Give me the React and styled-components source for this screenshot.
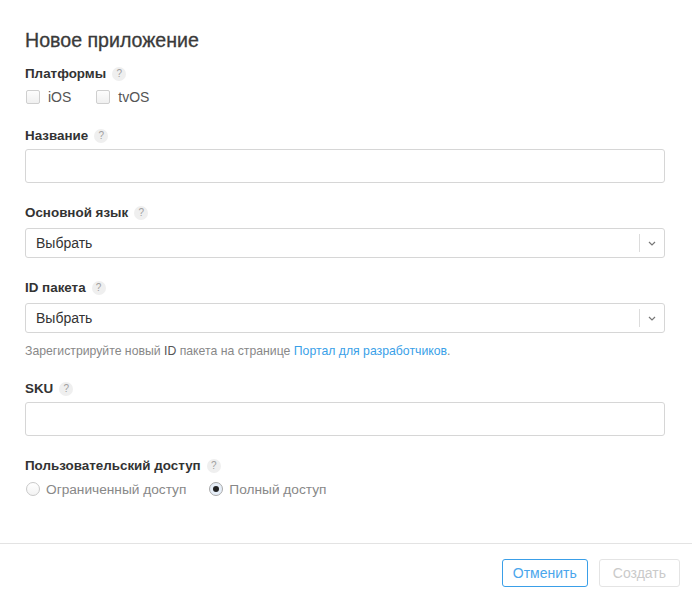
import React from "react";
import styled, { createGlobalStyle } from "styled-components";

const Global = createGlobalStyle`
  html, body { margin: 0; padding: 0; background: #fff; }
  body { font-family: "Liberation Sans", Arial, sans-serif; color: #333; }
  * { box-sizing: border-box; }
`;

const Page = styled.div`
  width: 692px;
  height: 599px;
  display: flex;
  flex-direction: column;
  background: #fff;
`;

const Content = styled.div`
  flex: 1;
  padding: 28px 27px 0 25px;
  display: flex;
  flex-direction: column;
`;

const Title = styled.h1`
  margin: 0 0 14px;
  font-size: 19.6px;
  line-height: 24px;
  font-weight: 400;
  color: #3a3a3a;
  -webkit-text-stroke: 0.3px #3a3a3a;
`;

const Field = styled.div`
  display: flex;
  flex-direction: column;
  margin-bottom: ${(p) => p.$mb ?? 22}px;
`;

const LabelRow = styled.div`
  display: flex;
  align-items: center;
  gap: 6px;
  height: 16px;
  margin-bottom: ${(p) => p.$gap ?? 5}px;
`;

const Label = styled.span`
  font-size: 13.4px;
  font-weight: 700;
  color: #333;
  line-height: 16px;
`;

const Help = styled.span`
  width: 14px;
  height: 14px;
  border-radius: 50%;
  background: #efefef;
  color: #a0a0a0;
  font-size: 10px;
  line-height: 14px;
  text-align: center;
`;

const CheckRow = styled.div`
  display: flex;
  align-items: center;
  height: 18px;
`;

const CheckItem = styled.label`
  display: flex;
  align-items: center;
  margin-right: ${(p) => p.$mr ?? 0}px;
  font-size: ${(p) => p.$size ?? 14}px;
  color: ${(p) => p.$color || "#555"};
`;

const Box = styled.span`
  width: 14px;
  height: 14px;
  border: 1px solid #cfcfcf;
  border-radius: 2px;
  background: linear-gradient(#fdfdfd, #f0f0f0);
  margin-left: 1px;
  margin-right: 8px;
`;

const Radio = styled.span`
  width: 14px;
  height: 14px;
  border-radius: 50%;
  border: 1px solid ${(p) => (p.$checked ? "#a9a9a9" : "#c9c9c9")};
  background: ${(p) => (p.$checked ? "#e6eef8" : "linear-gradient(#fff, #f3f3f3)")};
  margin-left: 1px;
  margin-right: 6px;
  display: flex;
  align-items: center;
  justify-content: center;
  &::after {
    content: "";
    display: ${(p) => (p.$checked ? "block" : "none")};
    width: 6px;
    height: 6px;
    border-radius: 50%;
    background: #222;
  }
`;

const TextInput = styled.div`
  height: 34px;
  border: 1px solid #d6d6d6;
  border-radius: 3px;
  background: #fff;
`;

const Select = styled.div`
  height: 30px;
  border: 1px solid #d6d6d6;
  border-radius: 3px;
  display: flex;
  align-items: center;
  padding-left: 10px;
  font-size: 14px;
  color: #333;
`;

const SelectValue = styled.span`
  flex: 1;
`;

const Divider = styled.span`
  width: 1px;
  height: 18px;
  background: #dcdcdc;
`;

const Arrow = styled.span`
  width: 24px;
  display: flex;
  align-items: center;
  justify-content: center;
`;

const Hint = styled.div`
  margin-top: 10px;
  font-size: 12.25px;
  line-height: 16px;
  color: #888;
`;

const Strong = styled.span`
  color: #555;
`;

const Link = styled.a`
  color: #3a9fe8;
  text-decoration: none;
`;

const Footer = styled.div`
  height: 56px;
  border-top: 1px solid #e3e3e3;
  display: flex;
  justify-content: flex-end;
  align-items: flex-start;
  padding: 15px 12px 0 0;
  gap: 11px;
`;

const Button = styled.button`
  height: 28px;
  padding: 0 ${(p) => p.$px}px;
  border-radius: 3px;
  background: #fff;
  font-family: inherit;
  font-size: 14px;
  border: 1px solid ${(p) => (p.$primary ? "#3a9fe8" : "#e4e4e4")};
  color: ${(p) => (p.$primary ? "#4aa6ec" : "#cacaca")};
`;

const Chevron = () => (
  <svg width="8" height="5" viewBox="0 0 8 5">
    <path d="M1 1l3 3 3-3" fill="none" stroke="#777" strokeWidth="1.2" />
  </svg>
);

const LabelWithHelp = ({ children, gap }) => (
  <LabelRow $gap={gap}>
    <Label>{children}</Label>
    <Help>?</Help>
  </LabelRow>
);

const SelectBox = () => (
  <Select>
    <SelectValue>Выбрать</SelectValue>
    <Divider />
    <Arrow>
      <Chevron />
    </Arrow>
  </Select>
);

export default function App() {
  return (
    <Page>
      <Global />
      <Content>
        <Title>Новое приложение</Title>
        <Field>
          <LabelWithHelp gap={6}>Платформы</LabelWithHelp>
          <CheckRow>
            <CheckItem $mr={24}>
              <Box />
              iOS
            </CheckItem>
            <CheckItem>
              <Box />
              tvOS
            </CheckItem>
          </CheckRow>
        </Field>
        <Field>
          <LabelWithHelp gap={5}>Название</LabelWithHelp>
          <TextInput />
        </Field>
        <Field>
          <LabelWithHelp gap={7}>Основной язык</LabelWithHelp>
          <SelectBox />
        </Field>
        <Field>
          <LabelWithHelp gap={7}>ID пакета</LabelWithHelp>
          <SelectBox />
          <Hint>
            Зарегистрируйте новый <Strong>ID</Strong> пакета на странице{" "}
            <Link>Портал для разработчиков</Link>.
          </Hint>
        </Field>
        <Field>
          <LabelWithHelp gap={5}>SKU</LabelWithHelp>
          <TextInput />
        </Field>
        <Field $mb={0}>
          <LabelWithHelp gap={6}>Пользовательский доступ</LabelWithHelp>
          <CheckRow>
            <CheckItem $mr={22} $size={13.7} $color="#888">
              <Radio />
              Ограниченный доступ
            </CheckItem>
            <CheckItem $size={13.7} $color="#888">
              <Radio $checked />
              Полный доступ
            </CheckItem>
          </CheckRow>
        </Field>
      </Content>
      <Footer>
        <Button $primary $px={10}>Отменить</Button>
        <Button $px={13}>Создать</Button>
      </Footer>
    </Page>
  );
}
